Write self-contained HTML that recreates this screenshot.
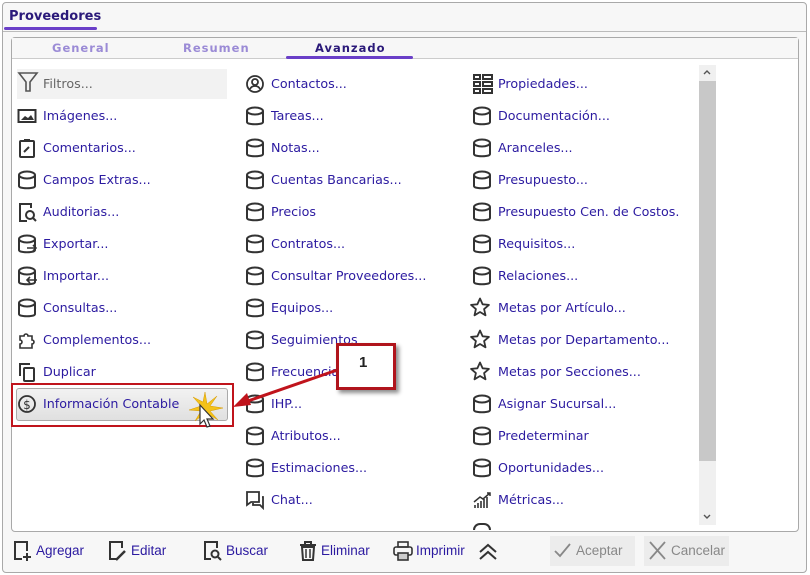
<!DOCTYPE html>
<html><head><meta charset="utf-8"><style>
*{margin:0;padding:0;box-sizing:border-box}
body{width:810px;height:575px;background:#fff;position:relative;overflow:hidden;font-family:"DejaVu Sans","Liberation Sans",sans-serif}
.win{position:absolute;left:2px;top:2px;width:805px;height:571px;border:1px solid #a9a9a9;border-radius:4px;background:#f7f7f7}
.abs{position:absolute}
.it{position:absolute;height:20px;line-height:20px;font-size:12.7px;color:#2b1aa0;white-space:nowrap}
.it svg{position:absolute;top:0;left:-26px}
.tb{position:absolute;font-family:"Liberation Sans",sans-serif;font-size:13.5px;color:#2b1aa0;line-height:20px;top:541px;white-space:nowrap}
.tb svg{position:absolute;left:-24px;top:-1px}
</style></head><body>
<svg width="0" height="0" style="position:absolute"><defs>
<g id="cyl"><path d="M2 5v11c0 3 16 3 16 0V5" fill="none" stroke="#333" stroke-width="2"/><ellipse cx="10" cy="5" rx="8" ry="3.5" fill="none" stroke="#333" stroke-width="2"/></g>
<g id="star"><path d="M10 1.5l2.6 5.8 6.3.6-4.8 4.2 1.4 6.2L10 15l-5.5 3.3 1.4-6.2L1.1 7.9l6.3-.6z" fill="none" stroke="#333" stroke-width="1.8" stroke-linejoin="round"/></g>
</defs></svg>
<div class="win"></div>
<div class="abs" style="left:9px;top:9px;font:bold 13px 'DejaVu Sans',sans-serif;color:#2b1a7a">Proveedores</div>
<div class="abs" style="left:4px;top:27px;width:93px;height:3px;background:#6a3fc8;border-radius:2px"></div>
<div class="abs" style="left:3px;top:31px;width:803px;height:1px;background:#bbb"></div>
<div class="abs" style="left:11px;top:37px;width:788px;height:495px;background:#fff;border:1px solid #a9a9a9;border-radius:4px"></div>
<div class="abs" style="left:12px;top:38px;width:786px;height:21px;background:#f7f7f7;border-bottom:1px solid #ccc"></div>
<div class="abs" style="left:52px;top:41px;font:bold 11.5px 'DejaVu Sans',sans-serif;letter-spacing:1px;color:#9b8bd6">General</div>
<div class="abs" style="left:183px;top:41px;font:bold 11.5px 'DejaVu Sans',sans-serif;letter-spacing:1px;color:#9b8bd6">Resumen</div>
<div class="abs" style="left:315px;top:41px;font:bold 11.5px 'DejaVu Sans',sans-serif;letter-spacing:1px;color:#2b1a7a">Avanzado</div>
<div class="abs" style="left:286px;top:56px;width:127px;height:3px;background:#6a3fc8;border-radius:2px"></div>
<!-- scrollbar -->
<div class="abs" style="left:699px;top:65px;width:17px;height:460px;background:#f0f0f0"></div>
<div class="abs" style="left:699px;top:81px;width:17px;height:380px;background:#c8c8c8"></div>
<svg class="abs" style="left:702px;top:67px" width="10" height="10"><path d="M2 7l3-3 3 3" fill="none" stroke="#555" stroke-width="1.4"/></svg>
<svg class="abs" style="left:702px;top:512px" width="10" height="10"><path d="M2 3l3 3 3-3" fill="none" stroke="#555" stroke-width="1.4"/></svg>
<!-- filter bg -->
<div class="abs" style="left:17px;top:69px;width:210px;height:30px;background:#f2f2f2"></div>
<!-- col1 -->
<div class="it" style="left:43px;top:74px;color:#666"><svg width="22" height="22" viewBox="0 0 22 22" style="left:-26px;top:-3px"><path d="M2 2h18l-7 9v9h-4v-9z" fill="none" stroke="#555" stroke-width="1.6"/></svg>Filtros...</div>
<div class="it" style="left:43px;top:106px"><svg width="20" height="20"><rect x="1.5" y="4" width="17" height="12" fill="none" stroke="#333" stroke-width="2"/><path d="M4 14l4-4 3 2 3-3 3 5z" fill="#333"/></svg>Imágenes...</div>
<div class="it" style="left:43px;top:138px"><svg width="20" height="20"><rect x="3" y="3" width="14" height="16" rx="1" fill="none" stroke="#333" stroke-width="2"/><rect x="7" y="1" width="6" height="3" fill="#333"/><path d="M7 14l5-5" stroke="#333" stroke-width="2"/></svg>Comentarios...</div>
<div class="it" style="left:43px;top:170px"><svg width="20" height="20"><use href="#cyl"/></svg>Campos Extras...</div>
<div class="it" style="left:43px;top:202px"><svg width="20" height="20"><path d="M14 6V2H3v17h7" fill="none" stroke="#333" stroke-width="2"/><circle cx="13" cy="13" r="4" fill="none" stroke="#333" stroke-width="2"/><path d="M16 16l3 3" stroke="#333" stroke-width="2"/></svg>Auditorias...</div>
<div class="it" style="left:43px;top:234px"><svg width="20" height="20"><use href="#cyl"/><path d="M10 14h9m-3-3l3 3-3 3" fill="none" stroke="#333" stroke-width="1.6"/></svg>Exportar...</div>
<div class="it" style="left:43px;top:266px"><svg width="20" height="20"><use href="#cyl"/><path d="M20 14h-10m3-3l-3 3 3 3" fill="none" stroke="#333" stroke-width="1.6"/></svg>Importar...</div>
<div class="it" style="left:43px;top:298px"><svg width="20" height="20"><use href="#cyl"/></svg>Consultas...</div>
<div class="it" style="left:43px;top:330px"><svg width="20" height="20"><path d="M3 6h4a2 2 0 1 1 4 0h4v4a2 2 0 1 1 0 4v4H3v-4a2 2 0 1 0 0-4z" fill="none" stroke="#333" stroke-width="1.6"/></svg>Complementos...</div>
<div class="it" style="left:43px;top:362px"><svg width="20" height="20"><path d="M3 14V2h10" fill="none" stroke="#333" stroke-width="2"/><rect x="7" y="6" width="10" height="13" rx="1" fill="none" stroke="#333" stroke-width="2"/></svg>Duplicar</div>
<!-- highlighted -->
<div class="abs" style="left:11px;top:383px;width:223px;height:44px;border:2px solid #c0141c"></div>
<div class="abs" style="left:16px;top:388px;width:212px;height:33px;border:1px solid #aaa;border-radius:3px;background:linear-gradient(#f2f2f2,#e0e0e0)"></div>
<div class="it" style="left:43px;top:394px"><svg width="20" height="20"><circle cx="10" cy="10" r="8" fill="none" stroke="#333" stroke-width="1.8"/><text x="10" y="15" font-size="12" text-anchor="middle" fill="#333" font-family="DejaVu Sans">$</text></svg>Información Contable</div>
<svg class="abs" style="left:185px;top:390px" width="40" height="40"><path d="M20 2l2 12 10-8-7 10 13 2-13 3 8 9-10-6-1 12-3-12-9 7 6-10-12-1 12-4-8-9 10 5z" fill="#f4c21a" stroke="#d79a00" stroke-width=".5"/><path d="M15 15v19l4-4 3 7 3-1-3-7h6z" fill="#fff" stroke="#333" stroke-width="1.2"/></svg>
<!-- col2 -->
<div class="it" style="left:271px;top:74px"><svg width="20" height="20"><circle cx="10" cy="10" r="8" fill="none" stroke="#333" stroke-width="1.8"/><circle cx="10" cy="8" r="3" fill="none" stroke="#333" stroke-width="1.8"/><path d="M5 15c2-4 8-4 10 0" fill="none" stroke="#333" stroke-width="1.8"/></svg>Contactos...</div>
<div class="it" style="left:271px;top:106px"><svg width="20" height="20"><use href="#cyl"/></svg>Tareas...</div>
<div class="it" style="left:271px;top:138px"><svg width="20" height="20"><use href="#cyl"/></svg>Notas...</div>
<div class="it" style="left:271px;top:170px"><svg width="20" height="20"><use href="#cyl"/></svg>Cuentas Bancarias...</div>
<div class="it" style="left:271px;top:202px"><svg width="20" height="20"><use href="#cyl"/></svg>Precios</div>
<div class="it" style="left:271px;top:234px"><svg width="20" height="20"><use href="#cyl"/></svg>Contratos...</div>
<div class="it" style="left:271px;top:266px"><svg width="20" height="20"><use href="#cyl"/></svg>Consultar Proveedores...</div>
<div class="it" style="left:271px;top:298px"><svg width="20" height="20"><use href="#cyl"/></svg>Equipos...</div>
<div class="it" style="left:271px;top:330px"><svg width="20" height="20"><use href="#cyl"/></svg>Seguimientos</div>
<div class="it" style="left:271px;top:362px"><svg width="20" height="20"><use href="#cyl"/></svg>Frecuencia</div>
<div class="it" style="left:271px;top:394px"><svg width="20" height="20"><use href="#cyl"/></svg>IHP...</div>
<div class="it" style="left:271px;top:426px"><svg width="20" height="20"><use href="#cyl"/></svg>Atributos...</div>
<div class="it" style="left:271px;top:458px"><svg width="20" height="20"><use href="#cyl"/></svg>Estimaciones...</div>
<div class="it" style="left:271px;top:490px"><svg width="20" height="20"><path d="M2 2h12v10H6l-4 3z" fill="none" stroke="#333" stroke-width="1.8"/><path d="M17 7h1v11l-3-3H8v-2" fill="none" stroke="#333" stroke-width="1.8"/></svg>Chat...</div>
<!-- col3 -->
<div class="it" style="left:498px;top:74px"><svg width="22" height="22" style="left:-26px;top:-1px"><g fill="none" stroke="#333" stroke-width="2"><rect x="2" y="2" width="6" height="4"/><rect x="2" y="9" width="6" height="4"/><rect x="2" y="16" width="6" height="4"/><rect x="11" y="2" width="9" height="4"/><rect x="11" y="9" width="9" height="4"/><rect x="11" y="16" width="9" height="4"/></g></svg>Propiedades...</div>
<div class="it" style="left:498px;top:106px"><svg width="20" height="20"><use href="#cyl"/></svg>Documentación...</div>
<div class="it" style="left:498px;top:138px"><svg width="20" height="20"><use href="#cyl"/></svg>Aranceles...</div>
<div class="it" style="left:498px;top:170px"><svg width="20" height="20"><use href="#cyl"/></svg>Presupuesto...</div>
<div class="it" style="left:498px;top:202px"><svg width="20" height="20"><use href="#cyl"/></svg>Presupuesto Cen. de Costos.</div>
<div class="it" style="left:498px;top:234px"><svg width="20" height="20"><use href="#cyl"/></svg>Requisitos...</div>
<div class="it" style="left:498px;top:266px"><svg width="20" height="20"><use href="#cyl"/></svg>Relaciones...</div>
<div class="it" style="left:498px;top:298px"><svg width="22" height="22" style="left:-28px;top:-1px"><use href="#star"/></svg>Metas por Artículo...</div>
<div class="it" style="left:498px;top:330px"><svg width="22" height="22" style="left:-28px;top:-1px"><use href="#star"/></svg>Metas por Departamento...</div>
<div class="it" style="left:498px;top:362px"><svg width="22" height="22" style="left:-28px;top:-1px"><use href="#star"/></svg>Metas por Secciones...</div>
<div class="it" style="left:498px;top:394px"><svg width="20" height="20"><use href="#cyl"/></svg>Asignar Sucursal...</div>
<div class="it" style="left:498px;top:426px"><svg width="20" height="20"><use href="#cyl"/></svg>Predeterminar</div>
<div class="it" style="left:498px;top:458px"><svg width="20" height="20"><use href="#cyl"/></svg>Oportunidades...</div>
<div class="it" style="left:498px;top:490px"><svg width="22" height="20" style="left:-26px"><path d="M3 18v-3M6 18v-5M9 18v-7M12 18v-9M15 18v-11" stroke="#333" stroke-width="1.6"/><path d="M2 12l6-5 3 2 7-6m-3 0h3v3" fill="none" stroke="#333" stroke-width="1.5"/></svg>Métricas...</div>
<div class="abs" style="left:473px;top:523px;width:18px;height:7px;border:2px solid #333;border-bottom:none;border-radius:9px 9px 0 0"></div>
<!-- callout -->
<svg class="abs" style="left:225px;top:355px" width="120" height="60"><path d="M115 14L20 47" stroke="#c0141c" stroke-width="3"/><path d="M8 52l14-14 4 12z" fill="#c0141c"/></svg>
<div class="abs" style="left:336px;top:343px;width:60px;height:47px;background:#fff;border:3px solid #b0141c;box-shadow:3px 3px 4px rgba(0,0,0,.45)"></div>
<div class="abs" style="left:359px;top:354px;font:bold 15px 'Liberation Sans',sans-serif;color:#222">1</div>
<!-- toolbar -->
<div class="tb" style="left:36px"><svg width="22" height="22"><path d="M10 19H3V2h12v9" fill="none" stroke="#333" stroke-width="2"/><path d="M15 13v8M11 17h8" stroke="#333" stroke-width="2"/></svg>Agregar</div>
<div class="tb" style="left:131px"><svg width="22" height="22"><path d="M10 19H3V2h12v6" fill="none" stroke="#333" stroke-width="2"/><path d="M9 20l9-9" stroke="#333" stroke-width="2.5"/></svg>Editar</div>
<div class="tb" style="left:226px"><svg width="22" height="22"><path d="M9 19H3V2h12v6" fill="none" stroke="#333" stroke-width="2"/><circle cx="13" cy="14" r="3.5" fill="none" stroke="#333" stroke-width="2"/><path d="M16 17l3 3" stroke="#333" stroke-width="2"/></svg>Buscar</div>
<div class="tb" style="left:321px"><svg width="22" height="22"><path d="M3 5h16M8 5V2h6v3M5 7h12l-1 13H6z" fill="none" stroke="#333" stroke-width="2"/><path d="M9 9v9M13 9v9" stroke="#333" stroke-width="1.5"/></svg>Eliminar</div>
<div class="tb" style="left:416px"><svg width="22" height="22"><rect x="6" y="2" width="10" height="5" fill="none" stroke="#333" stroke-width="1.6"/><rect x="2" y="7" width="18" height="8" rx="2" fill="none" stroke="#333" stroke-width="1.6"/><rect x="6" y="13" width="10" height="7" fill="#ccc" stroke="#333" stroke-width="1.6"/></svg>Imprimir</div>
<svg class="abs" style="left:477px;top:542px" width="22" height="20"><path d="M3 10l8-7 8 7M3 17l8-7 8 7" fill="none" stroke="#333" stroke-width="2"/></svg>
<div class="abs" style="left:550px;top:536px;width:85px;height:30px;background:#ececec"></div>
<div class="tb" style="left:576px;color:#888"><svg width="20" height="20" style="left:-24px"><path d="M3 11l5 5 10-12" fill="none" stroke="#888" stroke-width="1.8"/></svg>Aceptar</div>
<div class="abs" style="left:644px;top:536px;width:85px;height:30px;background:#ececec"></div>
<div class="tb" style="left:671px;color:#888"><svg width="20" height="20" style="left:-24px"><path d="M3 2l15 17M18 2L3 19" stroke="#888" stroke-width="1.8"/></svg>Cancelar</div>
</body></html>
